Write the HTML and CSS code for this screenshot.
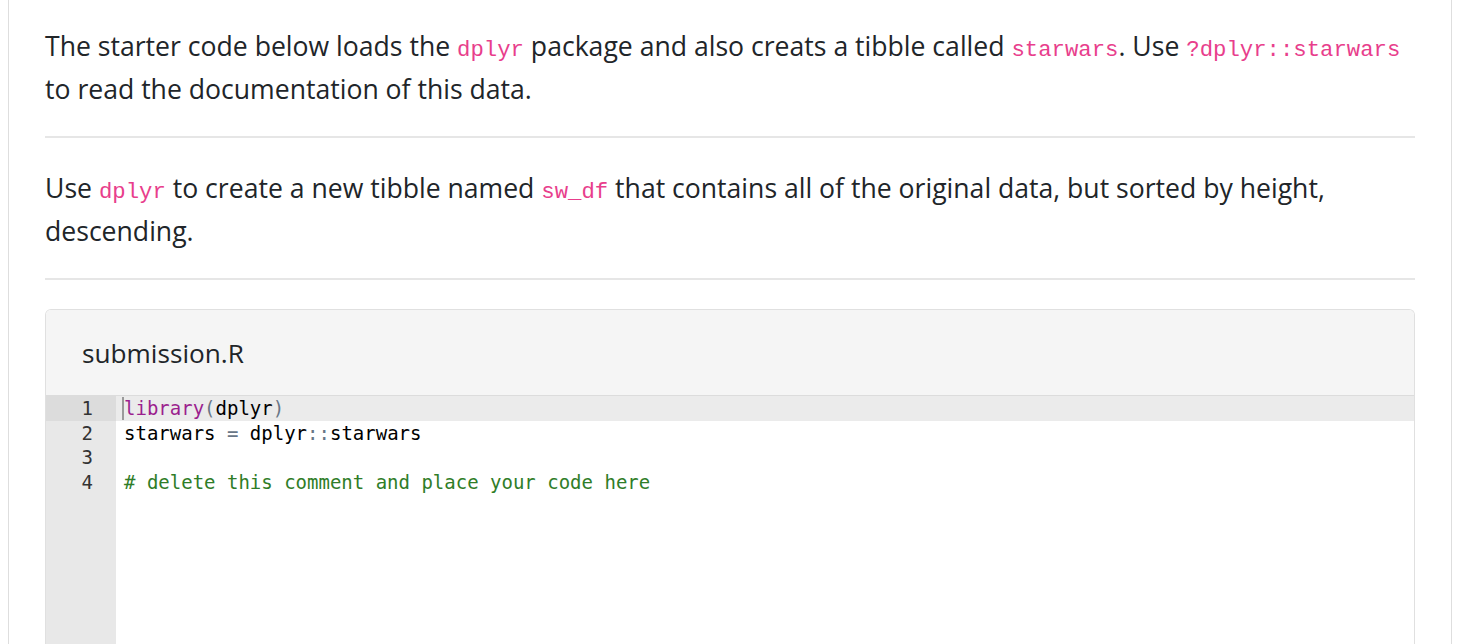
FILE: index.html
```html
<!DOCTYPE html>
<html>
<head>
<meta charset="utf-8">
<link rel="stylesheet" href="styles.css">
</head>
<body>
<div class="page">
  <p class="text">The starter code below loads the <code>dplyr</code> package and also creats a tibble called <code>starwars</code>. Use <code>?dplyr::starwars</code> to read the documentation of this data.</p>
  <hr class="rule">
  <p class="text">Use <code>dplyr</code> to create a new tibble named <code>sw_df</code> that contains all of the original data, but sorted by height, descending.</p>
  <hr class="rule">
  <div class="card">
    <div class="card-header">submission.R</div>
    <div class="editor">
      <div class="gutter">
        <div class="num active">1</div>
        <div class="num">2</div>
        <div class="num">3</div>
        <div class="num">4</div>
      </div>
      <div class="lines">
        <div class="line active"><span class="cursor"></span><span class="kw">library</span><span class="paren">(</span>dplyr<span class="paren">)</span></div>
        <div class="line">starwars <span class="op">=</span> dplyr<span class="op">::</span>starwars</div>
        <div class="line"></div>
        <div class="line"><span class="comment"># delete this comment and place your code here</span></div>
      </div>
    </div>
  </div>
</div>
</body>
</html>
```

FILE: styles.css
```css
html, body {
  margin: 0;
  padding: 0;
  background: #ffffff;
}
body {
  font-family: "Open Sans", "Noto Sans", sans-serif;
  color: #212529;
  overflow: hidden;
  height: 644px;
}
.page {
  box-sizing: border-box;
  margin-left: 8px;
  width: 1444px;
  min-height: 700px;
  border-left: 1px solid #dedede;
  border-right: 1px solid #dedede;
  padding: 25px 36px 0 36px;
}
.text {
  margin: 0;
  font-size: 26.6px;
  line-height: 43px;
}
.text code {
  font-family: "Liberation Mono", "DejaVu Sans Mono", monospace;
  font-size: 22.3px;
  line-height: 1;
  color: #e83e8c;
  white-space: nowrap;
}
.rule {
  border: 0;
  border-top: 2px solid #e6e6e6;
  margin: 25px 0 29px 0;
}
.card {
  margin-top: 28px;
  border: 1px solid #e0e0e0;
  border-radius: 6px 6px 0 0;
  border-bottom: 0;
  overflow: hidden;
}
.card-header {
  background: #f5f5f5;
  border-bottom: 1px solid #dcdcdc;
  height: 86px;
  box-sizing: border-box;
  padding: 0 36px;
  display: flex;
  align-items: center;
  font-size: 26.2px;
  color: #212529;
}
.editor {
  display: flex;
  min-height: 300px;
  font-family: "DejaVu Sans Mono", "Liberation Mono", monospace;
  font-size: 19px;
}
.gutter {
  width: 70px;
  background: #e8e8e8;
  color: #333333;
  flex: none;
}
.num {
  height: 24.6px;
  line-height: 24.6px;
  text-align: right;
  padding-right: 23px;
}
.num.active {
  background: #dcdcdc;
}
.lines {
  flex: 1;
}
.line {
  position: relative;
  height: 24.6px;
  line-height: 24.6px;
  padding-left: 8px;
  color: #000000;
  white-space: pre;
}
.line.active {
  background: #ebebeb;
}
.cursor {
  position: absolute;
  left: 6px;
  top: 1px;
  width: 2px;
  height: 23px;
  background: #9a9a9a;
}
.kw {
  color: #9b1f8e;
}
.paren, .op {
  color: #687687;
}
.comment {
  color: #2f7d28;
}
```
